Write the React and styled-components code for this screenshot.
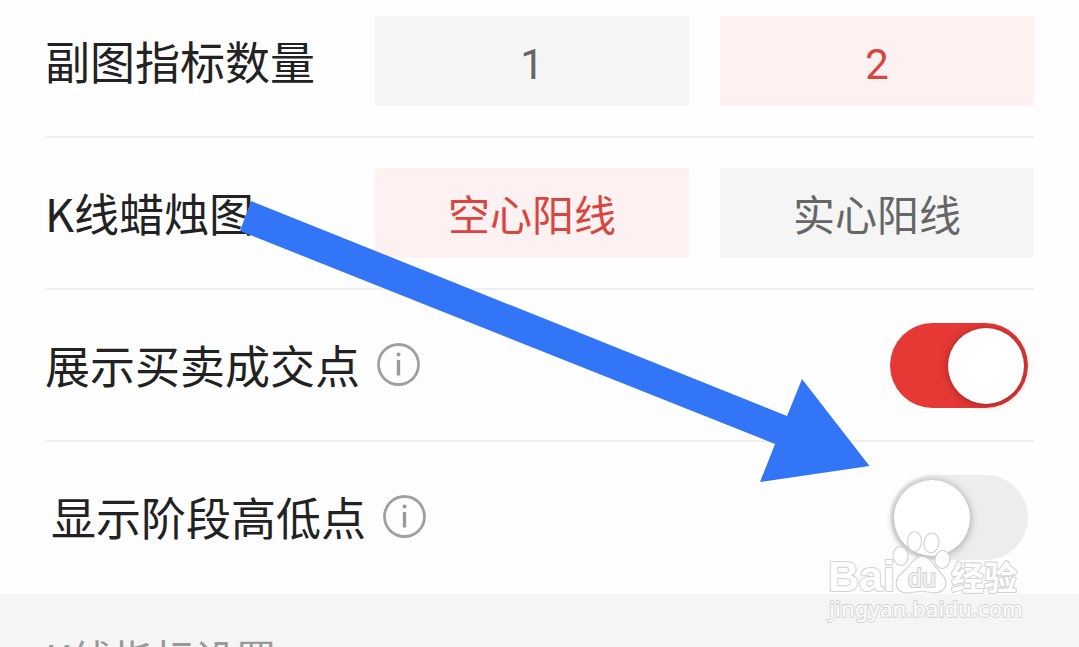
import React, { useState } from "react";
import styled, { createGlobalStyle } from "styled-components";

const GlobalStyle = createGlobalStyle`
  *, *::before, *::after { box-sizing: border-box; }
  html, body { margin: 0; background: #fefefe; }
  body {
    height: 100vh;
    overflow: hidden;
    font-family: "Noto Sans CJK SC", sans-serif;
    color: #222222;
  }
`;

const Page = styled.main`
  position: relative;
`;

const Settings = styled.section`
  display: flex;
  flex-direction: column;
  padding: 0 45px;
`;

const Row = styled.div`
  display: flex;
  align-items: center;
  min-height: ${(p) => (p.$first ? 138 : 152)}px;
  padding-top: ${(p) => (p.$first ? 16 : 30)}px;
  padding-bottom: 30px;
  padding-left: ${(p) => (p.$indented ? 6 : 0)}px;
  border-bottom: 2px solid ${(p) => (p.$last ? "transparent" : "#f0f0f0")};
`;

const Label = styled.label`
  font-size: 45px;
  line-height: 60px;
  white-space: nowrap;
`;

const GroupLabel = styled.span`
  flex: 0 0 330px;
  font-size: 45px;
  line-height: 60px;
  white-space: nowrap;
`;

const Options = styled.div`
  flex: 1;
  display: grid;
  grid-template-columns: 1fr 1fr;
  gap: 31px;
`;

const Option = styled.button`
  height: 90px;
  padding: 0;
  border: 0;
  font: inherit;
  font-size: 42px;
  line-height: 60px;
  color: ${(p) => (p.$active ? "#d9463f" : "#666666")};
  background: ${(p) => (p.$active ? "#fef1f1" : "#f5f5f5")};
`;

const Numeral = styled.span`
  font-family: Roboto, sans-serif;
  line-height: 1;
`;

const InfoButton = styled.button`
  display: flex;
  margin-left: 17px;
  padding: 0;
  border: 0;
  background: none;
`;

const Switch = styled.input`
  appearance: none;
  position: relative;
  width: 138px;
  height: 85px;
  margin: 0 6px 0 auto;
  border-radius: 43px;
  background: ${(p) => (p.checked ? "#e63935" : "#ededed")};

  &::before {
    content: "";
    position: absolute;
    top: 5px;
    left: ${(p) => (p.checked ? 58 : 4)}px;
    width: 76px;
    height: 76px;
    border-radius: 50%;
    background: #ffffff;
    box-shadow: 0 1px 8px rgba(0, 0, 0, 0.35);
  }
`;

const NextSection = styled.section`
  padding: 33px 45px;
  background: #f5f5f5;
`;

const SectionTitle = styled.h2`
  margin: 0;
  font-size: 41px;
  font-weight: 400;
  line-height: 60px;
  color: #999999;
`;

const Arrow = styled.svg`
  position: absolute;
  left: 240px;
  top: 201px;
  pointer-events: none;
`;

const Watermark = styled.svg`
  position: absolute;
  top: 528px;
  right: 54px;
  pointer-events: none;
`;

function InfoIcon() {
  return (
    <svg width="44" height="44" viewBox="0 0 44 44" aria-hidden="true">
      <circle cx="21.5" cy="21.5" r="20" fill="none" stroke="#a0a0a0" strokeWidth="2.8" />
      <circle cx="21.5" cy="11.5" r="2" fill="#999999" />
      <path d="M21.5 17V32.5" stroke="#999999" strokeWidth="3.4" />
    </svg>
  );
}

function OptionRow({ label, options, initial, first, numeric }) {
  const [value, setValue] = useState(initial);
  return (
    <Row $first={first}>
      <GroupLabel>{label}</GroupLabel>
      <Options role="group" aria-label={label}>
        {options.map((name) => (
          <Option
            key={name}
            type="button"
            $active={name === value}
            aria-pressed={name === value}
            onClick={() => setValue(name)}
          >
            {numeric ? <Numeral>{name}</Numeral> : name}
          </Option>
        ))}
      </Options>
    </Row>
  );
}

function SwitchRow({ id, label, initial, indented, last }) {
  const [on, setOn] = useState(initial);
  return (
    <Row $indented={indented} $last={last}>
      <Label htmlFor={id}>{label}</Label>
      <InfoButton type="button" aria-label={label}>
        <InfoIcon />
      </InfoButton>
      <Switch id={id} type="checkbox" role="switch" checked={on} onChange={() => setOn(!on)} />
    </Row>
  );
}

function BaiduMark() {
  return (
    <Watermark width="200" height="100" viewBox="825 528 200 100">
      <g fill="#ffffff" stroke="#d4d4d4" strokeLinejoin="round">
        <g strokeWidth="1.2" fillOpacity="0.9">
          <ellipse cx="900.5" cy="556" rx="7.5" ry="9.5" transform="rotate(-8 900.5 556)" />
          <ellipse cx="914.5" cy="541.5" rx="7" ry="10" />
          <ellipse cx="931.5" cy="543" rx="7.5" ry="10" transform="rotate(8 931.5 543)" />
          <ellipse cx="942.5" cy="559.5" rx="7.5" ry="9" transform="rotate(8 942.5 559.5)" />
          <path d="M922 556.5C930 556.5 933 565 939 571C944 576 947 580 945.5 586C943 594 935 593.5 928 592C924 591.2 919 591.2 915 592C907 593.5 899 594 896.5 586C895 579 899 575 904 571C911 565 914 556.5 922 556.5Z" />
        </g>
        <g paintOrder="stroke" strokeWidth="2.2">
          <g fontFamily="Liberation Sans, sans-serif">
            <text x="828" y="591" fontSize="43" fontWeight="700">Bai</text>
            <text x="908" y="587" fontSize="25" fill="#f2f2f2">du</text>
          </g>
          <text x="951" y="590" fontSize="33" fontWeight="700" fontFamily="Noto Sans CJK SC, sans-serif">
            经验
          </text>
          <text x="829" y="617" fontSize="22" fontWeight="500" strokeWidth="1.8" fill="#fafafa" fontFamily="Noto Sans, sans-serif">
            jingyan.baidu.com
          </text>
        </g>
      </g>
    </Watermark>
  );
}

export default function App() {
  return (
    <>
      <GlobalStyle />
      <Page>
        <Settings>
          <OptionRow first numeric label="副图指标数量" options={["1", "2"]} initial="2" />
          <OptionRow label="K线蜡烛图" options={["空心阳线", "实心阳线"]} initial="空心阳线" />
          <SwitchRow id="trades" label="展示买卖成交点" initial />
          <SwitchRow id="extremes" label="显示阶段高低点" initial={false} indented last />
        </Settings>
        <NextSection>
          <SectionTitle>K线指标设置</SectionTitle>
        </NextSection>
        <Arrow width="630" height="282" viewBox="240 201 630 282" aria-hidden="true">
          <polygon points="251,201 787,416 802,379 869.5,466 760,482 775,444 240,231" fill="#3275f6" />
        </Arrow>
        <BaiduMark />
      </Page>
    </>
  );
}
